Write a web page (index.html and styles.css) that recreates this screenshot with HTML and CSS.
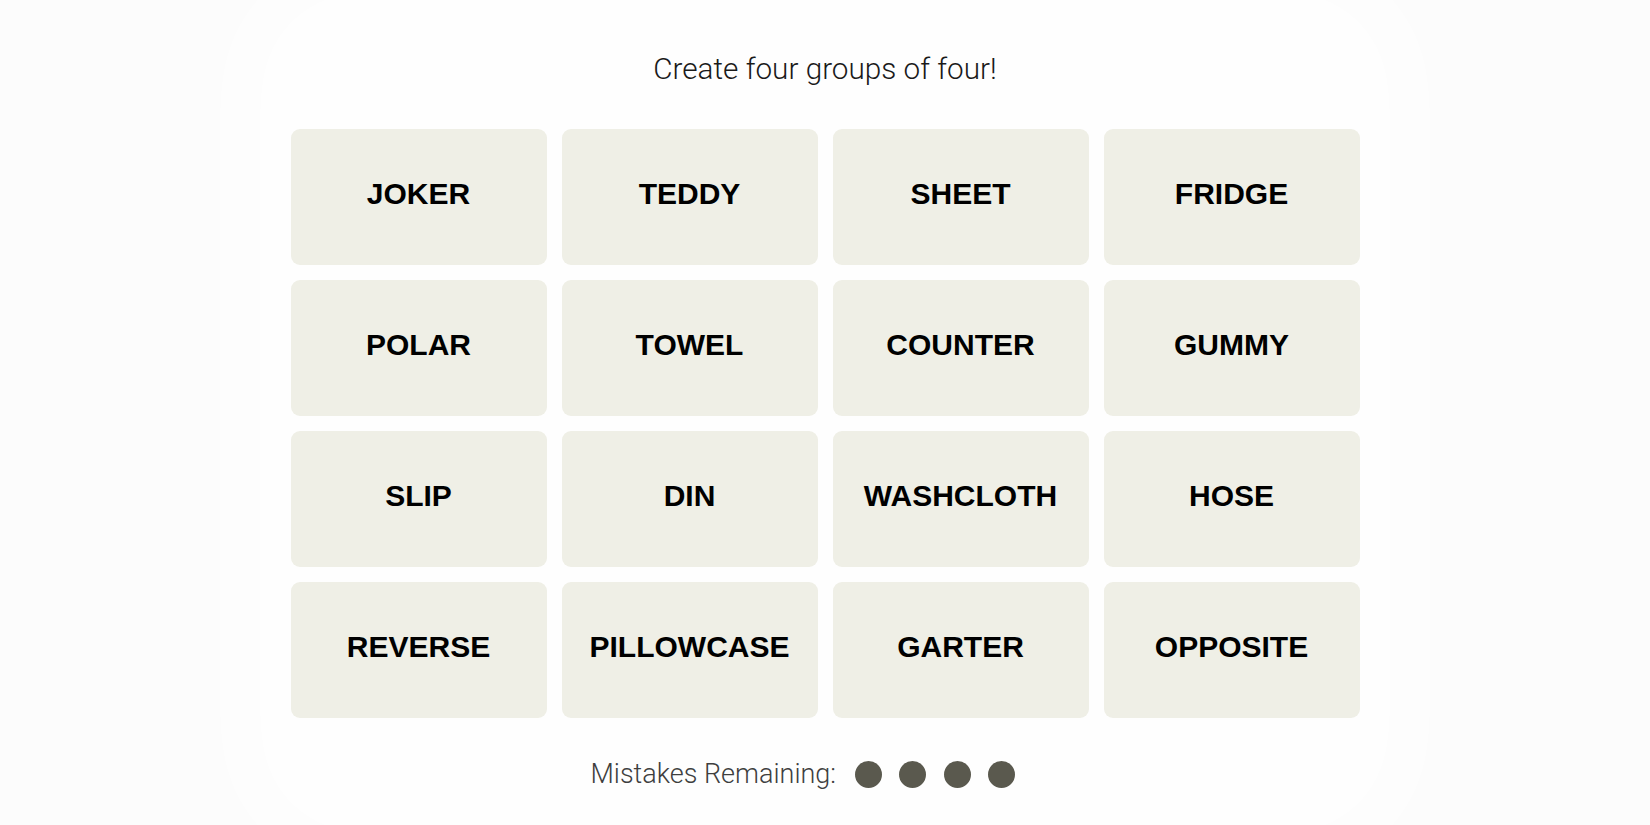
FILE: index.html
```html
<!DOCTYPE html>
<html lang="en">
<head>
<meta charset="utf-8">
<title>Connections</title>
<link rel="stylesheet" href="styles.css">
</head>
<body>
<main class="game">
  <h2 class="prompt">Create four groups of four!</h2>
  <section class="board">
    <div class="tile">JOKER</div>
    <div class="tile">TEDDY</div>
    <div class="tile">SHEET</div>
    <div class="tile">FRIDGE</div>
    <div class="tile">POLAR</div>
    <div class="tile">TOWEL</div>
    <div class="tile">COUNTER</div>
    <div class="tile">GUMMY</div>
    <div class="tile">SLIP</div>
    <div class="tile">DIN</div>
    <div class="tile">WASHCLOTH</div>
    <div class="tile">HOSE</div>
    <div class="tile">REVERSE</div>
    <div class="tile">PILLOWCASE</div>
    <div class="tile">GARTER</div>
    <div class="tile">OPPOSITE</div>
  </section>
  <div class="mistakes">
    <span class="mistakes-label">Mistakes Remaining:</span>
    <span class="dots">
      <span class="dot"></span>
      <span class="dot"></span>
      <span class="dot"></span>
      <span class="dot"></span>
    </span>
  </div>
</main>
</body>
</html>
```

FILE: styles.css
```css
html, body {
  margin: 0;
  padding: 0;
}

body {
  background: #fcfcfc;
  width: 1650px;
  height: 825px;
  overflow: hidden;
  font-family: "Liberation Sans", Arial, sans-serif;
  color: #000;
}

.game {
  display: flex;
  flex-direction: column;
  align-items: center;
  padding-top: 51px;
  margin: 0 auto;
  width: 1110px;
  height: 774px;
  background: #fefefe;
  border-radius: 90px;
  box-shadow: 0 0 60px 30px #fefefe;
}

.prompt {
  margin: 0;
  font-family: "Roboto", "Liberation Sans", sans-serif;
  font-weight: 300;
  font-size: 29.7px;
  line-height: 36px;
  color: #1a1a1a;
}

.board {
  margin-top: 42px;
  display: grid;
  grid-template-columns: repeat(4, 256px);
  grid-auto-rows: 136px;
  gap: 15px;
}

.tile {
  display: flex;
  align-items: center;
  justify-content: center;
  padding-bottom: 6px;
  box-sizing: border-box;
  background: #efefe6;
  border-radius: 9px;
  font-family: "Liberation Sans", Arial, sans-serif;
  font-weight: 700;
  font-size: 30px;
  color: #000;
}

.mistakes {
  margin-top: 43px;
  padding-right: 44px;
  display: flex;
  align-items: center;
  gap: 19px;
}

.mistakes-label {
  font-family: "Roboto", "Liberation Sans", sans-serif;
  font-weight: 300;
  font-size: 27px;
  line-height: 27px;
  color: #3f3f3f;
}

.dots {
  display: flex;
  gap: 17.5px;
}

.dot {
  width: 27px;
  height: 27px;
  border-radius: 50%;
  background: #5a594e;
}
```
